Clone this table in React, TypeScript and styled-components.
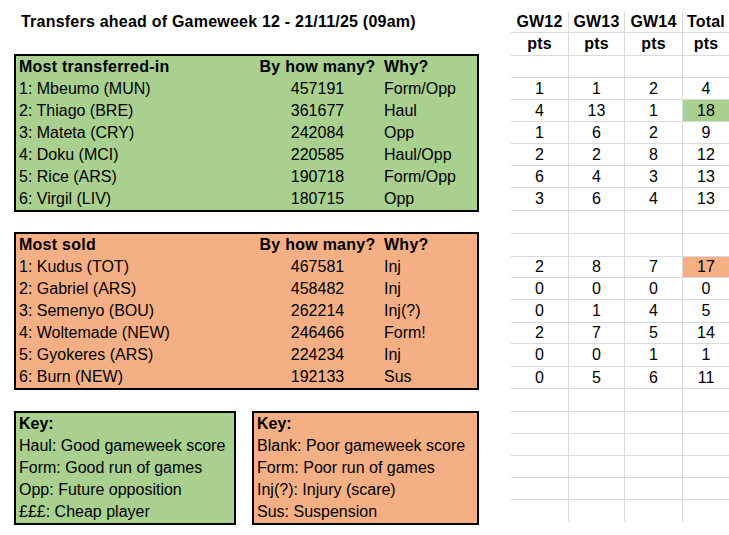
import React from 'react'
import styled, { createGlobalStyle } from 'styled-components'

const GlobalStyle = createGlobalStyle`
  html, body {
    margin: 0;
    padding: 0;
    background: #fff;
    overflow: hidden;
  }
  body {
    font-family: "Liberation Sans", Arial, sans-serif;
    font-size: 16px;
    color: #000;
  }
`

const GREEN = '#a9d08e'
const ORANGE = '#f4b084'

const Page = styled.div`
  display: flex;
  width: 729px;
  height: 535px;
`

const LeftPane = styled.div`
  width: 511px;
  flex-shrink: 0;
  padding-left: 14px;
  box-sizing: border-box;
  display: flex;
  flex-direction: column;
`

const Title = styled.h1`
  margin: 11px 0 0 7px;
  height: 22px;
  line-height: 22px;
  font-size: 16px;
  font-weight: bold;
  letter-spacing: 0.22px;
  white-space: nowrap;
`

const ListBox = styled.div<{ $bg: string; $top: number }>`
  margin-top: ${({ $top }) => $top}px;
  width: 465px;
  border: 2px solid #000;
  background: ${({ $bg }) => $bg};
  box-sizing: border-box;
`

const ListRow = styled.div<{ $head?: boolean }>`
  display: grid;
  grid-template-columns: 239px 125px 1fr;
  height: 22px;
  line-height: 22px;
  font-weight: ${({ $head }) => ($head ? 'bold' : 'normal')};
  letter-spacing: ${({ $head }) => ($head ? '0.25px' : 'normal')};
`

const NameCell = styled.span`
  padding-left: 3px;
  white-space: nowrap;
`

const CountCell = styled.span`
  text-align: center;
  white-space: nowrap;
`

const WhyCell = styled.span`
  padding-left: 4px;
  white-space: nowrap;
`

const KeyRow = styled.div`
  display: flex;
  gap: 16px;
  margin-top: 21px;
`

const KeyBox = styled.div<{ $bg: string; $width: number }>`
  width: ${({ $width }) => $width}px;
  border: 2px solid #000;
  background: ${({ $bg }) => $bg};
  box-sizing: border-box;
`

const KeyLine = styled.div<{ $head?: boolean }>`
  height: 22px;
  line-height: 22px;
  padding-left: 3px;
  white-space: nowrap;
  font-weight: ${({ $head }) => ($head ? 'bold' : 'normal')};
`

const PointsGrid = styled.div`
  margin-top: 11px;
  display: flex;
  flex-direction: column;
  width: 218px;
`

const GridRow = styled.div<{ $h: number; $first?: boolean }>`
  display: grid;
  grid-template-columns: 57px 56px 58px 47px;
  height: ${({ $h }) => $h}px;
  box-sizing: border-box;
  border-top: ${({ $first }) => ($first ? 'none' : '1px solid #dadada')};
`

const GridCell = styled.div<{ $bold?: boolean; $bg?: string; $edge?: boolean }>`
  display: flex;
  align-items: center;
  justify-content: center;
  border-left: ${({ $edge }) => ($edge ? 'none' : '1px solid #dadada')};
  background: ${({ $bg }) => $bg || 'transparent'};
  font-weight: ${({ $bold }) => ($bold ? 'bold' : 'normal')};
  letter-spacing: ${({ $bold }) => ($bold ? '0.2px' : 'normal')};
`

type Entry = [string, string, string]

const transferredIn: Entry[] = [
  ['1: Mbeumo (MUN)', '457191', 'Form/Opp'],
  ['2: Thiago (BRE)', '361677', 'Haul'],
  ['3: Mateta (CRY)', '242084', 'Opp'],
  ['4: Doku (MCI)', '220585', 'Haul/Opp'],
  ['5: Rice (ARS)', '190718', 'Form/Opp'],
  ['6: Virgil (LIV)', '180715', 'Opp'],
]

const sold: Entry[] = [
  ['1: Kudus (TOT)', '467581', 'Inj'],
  ['2: Gabriel (ARS)', '458482', 'Inj'],
  ['3: Semenyo (BOU)', '262214', 'Inj(?)'],
  ['4: Woltemade (NEW)', '246466', 'Form!'],
  ['5: Gyokeres (ARS)', '224234', 'Inj'],
  ['6: Burn (NEW)', '192133', 'Sus'],
]

const goodKey = ['Haul: Good gameweek score', 'Form: Good run of games', 'Opp: Future opposition', '£££: Cheap player']
const badKey = ['Blank: Poor gameweek score', 'Form: Poor run of games', 'Inj(?): Injury (scare)', 'Sus: Suspension']

// row heights of the sheet, top to bottom
const heights = [21, 23, 22, 22, 22, 22, 22, 22, 23, 23, 23, 21, 22, 23, 21, 23, 22, 23, 22, 22, 22, 22, 23]

type Row = { cells: string[]; bold?: boolean; hi?: string }

const empty: Row = { cells: ['', '', '', ''] }

const points: Row[] = [
  { cells: ['GW12', 'GW13', 'GW14', 'Total'], bold: true },
  { cells: ['pts', 'pts', 'pts', 'pts'], bold: true },
  empty,
  { cells: ['1', '1', '2', '4'] },
  { cells: ['4', '13', '1', '18'], hi: GREEN },
  { cells: ['1', '6', '2', '9'] },
  { cells: ['2', '2', '8', '12'] },
  { cells: ['6', '4', '3', '13'] },
  { cells: ['3', '6', '4', '13'] },
  empty,
  empty,
  { cells: ['2', '8', '7', '17'], hi: ORANGE },
  { cells: ['0', '0', '0', '0'] },
  { cells: ['0', '1', '4', '5'] },
  { cells: ['2', '7', '5', '14'] },
  { cells: ['0', '0', '1', '1'] },
  { cells: ['0', '5', '6', '11'] },
  empty,
  empty,
  empty,
  empty,
  empty,
  empty,
]

const TransferList: React.FC<{ title: string; rows: Entry[]; bg: string; top: number }> = ({ title, rows, bg, top }) => (
  <ListBox $bg={bg} $top={top}>
    <ListRow $head>
      <NameCell>{title}</NameCell>
      <CountCell>By how many?</CountCell>
      <WhyCell>Why?</WhyCell>
    </ListRow>
    {rows.map(([name, count, why]) => (
      <ListRow key={name}>
        <NameCell>{name}</NameCell>
        <CountCell>{count}</CountCell>
        <WhyCell>{why}</WhyCell>
      </ListRow>
    ))}
  </ListBox>
)

const App: React.FC = () => (
  <>
    <GlobalStyle />
    <Page>
      <LeftPane>
        <Title>Transfers ahead of Gameweek 12 - 21/11/25 (09am)</Title>
        <TransferList title="Most transferred-in" rows={transferredIn} bg={GREEN} top={21} />
        <TransferList title="Most sold" rows={sold} bg={ORANGE} top={20} />
        <KeyRow>
          <KeyBox $bg={GREEN} $width={222}>
            <KeyLine $head>Key:</KeyLine>
            {goodKey.map((k) => (
              <KeyLine key={k}>{k}</KeyLine>
            ))}
          </KeyBox>
          <KeyBox $bg={ORANGE} $width={227}>
            <KeyLine $head>Key:</KeyLine>
            {badKey.map((k) => (
              <KeyLine key={k}>{k}</KeyLine>
            ))}
          </KeyBox>
        </KeyRow>
      </LeftPane>
      <PointsGrid>
        {points.map((row, i) => (
          <GridRow key={i} $h={heights[i]} $first={i === 0}>
            {row.cells.map((c, j) => (
              <GridCell key={j} $edge={j === 0} $bold={row.bold} $bg={j === 3 ? row.hi : undefined}>
                {c}
              </GridCell>
            ))}
          </GridRow>
        ))}
      </PointsGrid>
    </Page>
  </>
)

export default App
